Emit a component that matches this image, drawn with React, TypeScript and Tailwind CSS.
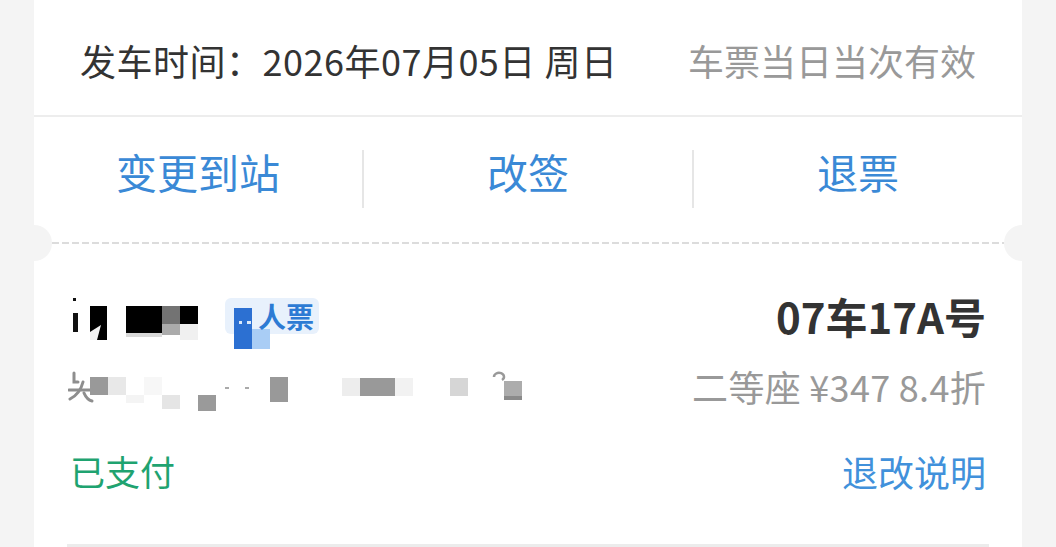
import React from 'react';

const ACTIONS = ['变更到站', '改签', '退票'];

// mosaic over the passenger name
const NameMosaic = () => (
  <svg width="155" height="48" viewBox="0 0 155 48" className="shrink-0">
    <rect x="3" y="6" width="3" height="3" fill="#111" />
    <rect x="3" y="21" width="5" height="19" fill="#111" />
    <rect x="20" y="14" width="17" height="34" fill="#000" />
    <polygon points="20,48 20,40 31,33 27,48" fill="#f2f2f2" />
    <rect x="56" y="14" width="36" height="27" fill="#000" />
    <rect x="56" y="41" width="36" height="4" fill="#d9d9d9" />
    <rect x="92" y="14" width="18" height="18" fill="#737373" />
    <rect x="92" y="32" width="18" height="11" fill="#ababab" />
    <rect x="110" y="14" width="18" height="18" fill="#000" />
    <rect x="110" y="32" width="18" height="16" fill="#f0f0f0" />
  </svg>
);

// mosaic over the id number
const IdMosaic = () => (
  <svg width="460" height="46" viewBox="0 0 460 46" className="shrink-0">
    <g stroke="#8e8e8e" strokeWidth="3" fill="none" strokeLinecap="round">
      <path d="M6 5 v9 h4" />
      <path d="M1 22 h21" />
      <path d="M15 14 q-3 12 -13 17" />
      <path d="M16 25 q3 7 8 8" />
    </g>
    <rect x="22" y="9" width="18" height="18" fill="#999" />
    <rect x="40" y="9" width="18" height="18" fill="#e8e8e8" />
    <rect x="58" y="27" width="18" height="8" fill="#f4f4f4" />
    <rect x="76" y="9" width="18" height="18" fill="#f7f7f7" />
    <rect x="94" y="27" width="18" height="14" fill="#e5e5e5" />
    <rect x="130" y="27" width="18" height="16" fill="#9a9a9a" />
    <rect x="157" y="19" width="4" height="2" fill="#aaa" />
    <rect x="177" y="19" width="4" height="2" fill="#aaa" />
    <rect x="202" y="9" width="18" height="25" fill="#999" />
    <rect x="274" y="10" width="18" height="18" fill="#ededed" />
    <rect x="292" y="10" width="35" height="18" fill="#999" />
    <rect x="327" y="10" width="18" height="18" fill="#f2f2f2" />
    <rect x="382" y="10" width="18" height="18" fill="#d6d6d6" />
    <path d="M426 9 a5 4 0 1 1 8 3" stroke="#999" strokeWidth="2.5" fill="none" />
    <rect x="436" y="13" width="18" height="15" fill="#acacac" />
    <rect x="436" y="28" width="18" height="4" fill="#8a8a8a" />
  </svg>
);

const TicketBadge = () => (
  <div className="relative flex h-[36px] items-center rounded-[6px] bg-[#e8f1fc] pl-[33px] pr-[5px]">
    <div className="absolute left-[9px] top-[10px] h-[41px] w-[18px] bg-[#2c70d2]" />
    <div className="absolute left-[27px] top-[31px] h-[20px] w-[18px] bg-[#a9cdf5]" />
    <div className="absolute left-[14px] top-[23px] h-[3px] w-[3px] bg-[#dbe9fa]" />
    <div className="absolute left-[22px] top-[23px] h-[3px] w-[4px] bg-[#dbe9fa]" />
    <span className="relative text-[28px] font-semibold leading-[36px] text-[#2d7bd4]">人票</span>
  </div>
);

export default function App() {
  return (
    <div className="h-[547px] w-full overflow-hidden bg-[#f4f4f4] px-[34px] font-['Noto_Sans_CJK_SC','Noto_Sans',sans-serif]">
      <div className="bg-white">
        {/* departure date */}
        <div className="flex h-[115px] items-center justify-between px-[46px] pt-[4px]">
          <span className="text-[36px] leading-[40px] tracking-[0.5px] text-[#333]">发车时间：2026年07月05日 周日</span>
          <span className="text-[36px] leading-[40px] text-[#999]">车票当日当次有效</span>
        </div>
        <div className="h-[2px] bg-[#ededed]" />

        {/* actions */}
        <div className="flex h-[125px] items-start">
          {ACTIONS.map((label, i) => (
            <React.Fragment key={label}>
              {i > 0 && <div className="mt-[33px] h-[58px] w-[2px] bg-[#e6e6e6]" />}
              <div className="mt-[30px] flex-1 text-center text-[41px] leading-[48px] text-[#3a89d6]">
                {label}
              </div>
            </React.Fragment>
          ))}
        </div>

        {/* tear line */}
        <div className="relative h-[2px]">
          <div className="mx-[18px] h-[2px] bg-[repeating-linear-gradient(90deg,#dcdcdc_0_7px,transparent_7px_10px)]" />
          <div className="absolute left-[-18px] top-[-17px] h-[36px] w-[36px] rounded-full bg-[#f4f4f4]" />
          <div className="absolute right-[-18px] top-[-17px] h-[36px] w-[36px] rounded-full bg-[#f4f4f4]" />
        </div>

        {/* passenger */}
        <div className="px-[36px] pt-[48px]">
          <div className="flex h-[48px] items-center justify-between">
            <div className="flex items-center">
              <NameMosaic />
              <TicketBadge />
            </div>
            <span className="text-[42px] font-bold leading-[48px] text-[#333]">07车17A号</span>
          </div>
          <div className="mt-[28px] flex h-[46px] items-start justify-between">
            <div className="-ml-[2px]">
              <IdMosaic />
            </div>
            <span className="text-[36px] leading-[36px] tracking-[0.3px] text-[#999]">二等座 ¥347 8.4折</span>
          </div>
          <div className="mt-[37px] flex items-center justify-between">
            <span className="text-[35px] leading-[40px] text-[#1fa370]">已支付</span>
            <span className="text-[36px] leading-[40px] text-[#4191db]">退改说明</span>
          </div>
        </div>
        <div className="mx-[33px] mt-[53px] h-[3px] bg-[#ececec]" />
      </div>
    </div>
  );
}
